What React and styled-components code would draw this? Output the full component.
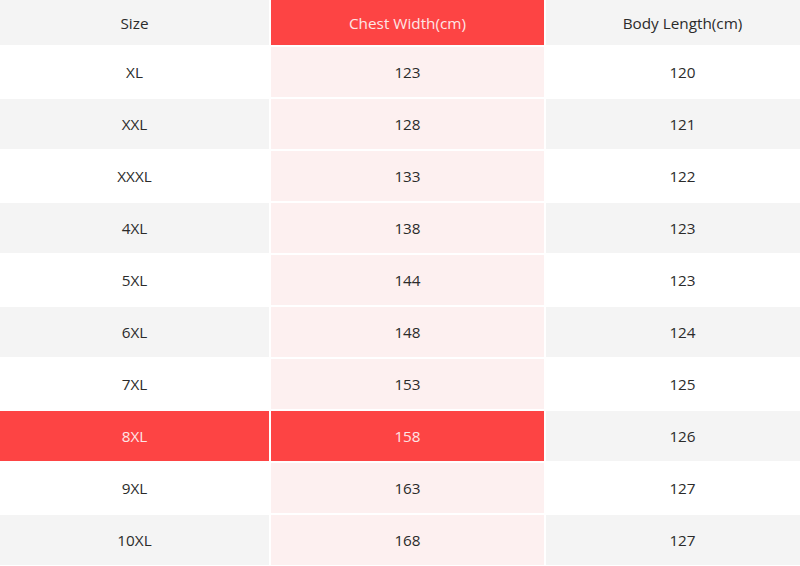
import React from 'react';
import styled, { createGlobalStyle } from 'styled-components';

const GlobalStyle = createGlobalStyle`
  html, body {
    margin: 0;
    padding: 0;
    background: #ffffff;
    overflow: hidden;
  }
`;

const Frame = styled.div`
  width: 800px;
  height: 566px;
  overflow: hidden;
`;

const StyledTable = styled.div`
  display: grid;
  grid-template-columns: 269px 273px 273px;
  grid-template-rows: 45px;
  grid-auto-rows: 50px;
  gap: 2px;
  width: 819px;
  background: #ffffff;
  font-family: 'Open Sans', 'Noto Sans', sans-serif;
  font-size: 15.3px;
  color: #2b2b2b;
`;

const tones = {
  white: { bg: '#ffffff', fg: '#2b2b2b' },
  gray: { bg: '#f4f4f4', fg: '#2b2b2b' },
  pink: { bg: '#fdf0f0', fg: '#2b2b2b' },
  red: { bg: '#fd4444', fg: '#fde6e6' },
};

const Cell = styled.div`
  display: flex;
  align-items: center;
  justify-content: center;
  background: ${({ $tone }) => tones[$tone].bg};
  color: ${({ $tone }) => tones[$tone].fg};
`;

const headers = ['Size', 'Chest Width(cm)', 'Body Length(cm)'];

const rows = [
  ['XL', '123', '120'],
  ['XXL', '128', '121'],
  ['XXXL', '133', '122'],
  ['4XL', '138', '123'],
  ['5XL', '144', '123'],
  ['6XL', '148', '124'],
  ['7XL', '153', '125'],
  ['8XL', '158', '126'],
  ['9XL', '163', '127'],
  ['10XL', '168', '127'],
];

const highlighted = '8XL';

const toneFor = (row, col, i) => {
  const stripe = i % 2 === 0 ? 'white' : 'gray';
  if (row[0] === highlighted && col < 2) return 'red';
  if (col === 1) return 'pink';
  return stripe;
};

const App = () => (
  <>
    <GlobalStyle />
    <Frame>
      <StyledTable>
        {headers.map((h, col) => (
          <Cell key={h} $tone={col === 1 ? 'red' : 'gray'}>
            {h}
          </Cell>
        ))}
        {rows.map((row, i) =>
          row.map((value, col) => (
            <Cell key={`${i}-${col}`} $tone={toneFor(row, col, i)}>
              {value}
            </Cell>
          ))
        )}
      </StyledTable>
    </Frame>
  </>
);

export default App;
